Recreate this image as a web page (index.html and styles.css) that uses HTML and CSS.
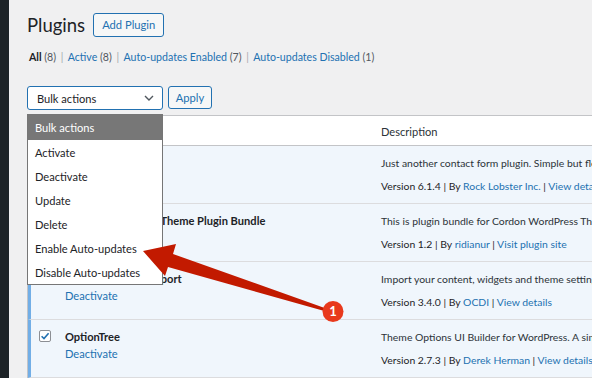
FILE: index.html
```html
<!DOCTYPE html>
<html lang="en">
<head>
    <meta charset="UTF-8">
    <meta name="viewport" content="width=device-width, initial-scale=1.0">
    <title>Plugins</title>
    <link rel="stylesheet" href="styles.css">
</head>
<body>
    <div class="admin">
        <div class="sidebar"></div>
        <main class="wrap">
            <div class="page-head">
                <h1>Plugins</h1>
                <a class="btn-outline" href="#">Add Plugin</a>
            </div>

            <div class="subsubsub">
                <span class="current">All <span class="count">(8)</span></span>
                <span class="sep">|</span>
                <a href="#">Active <span class="count">(8)</span></a>
                <span class="sep">|</span>
                <a href="#">Auto-updates Enabled <span class="count">(7)</span></a>
                <span class="sep">|</span>
                <a href="#">Auto-updates Disabled <span class="count">(1)</span></a>
            </div>

            <div class="tablenav">
                <div class="bulk">
                    <div class="select">
                        Bulk actions
                        <svg class="chevron" width="10" height="6" viewBox="0 0 10 6">
                            <polyline points="1,1 5,5 9,1" fill="none" stroke="#50575e" stroke-width="1.4"/>
                        </svg>
                    </div>
                    <ul class="select-menu">
                        <li class="selected">Bulk actions</li>
                        <li>Activate</li>
                        <li>Deactivate</li>
                        <li>Update</li>
                        <li>Delete</li>
                        <li>Enable Auto-updates</li>
                        <li>Disable Auto-updates</li>
                    </ul>
                </div>
                <button class="btn-apply">Apply</button>
            </div>

            <table class="plugins">
                <thead>
                    <tr>
                        <th class="check-column"><span class="checkbox"></span></th>
                        <th class="plugin-title">Plugin</th>
                        <th>Description</th>
                    </tr>
                </thead>
                <tbody>
                    <tr>
                        <td class="check-column">
                            <span class="checkbox checked">
                                <svg width="12" height="12" viewBox="0 0 12 12"><path d="M2.6 6.2 L5 8.6 L9.6 3.2" fill="none" stroke="#2271b1" stroke-width="1.6"/></svg>
                            </span>
                        </td>
                        <td class="plugin-title">
                            <strong>Contact Form 7</strong>
                            <div class="row-actions"><a href="#">Deactivate</a></div>
                        </td>
                        <td class="desc">
                            <p>Just another contact form plugin. Simple but flexible.</p>
                            <p class="meta">Version 6.1.4 | By <a href="#">Rock Lobster Inc.</a> | <a href="#">View details</a></p>
                        </td>
                    </tr>
                    <tr>
                        <td class="check-column">
                            <span class="checkbox checked">
                                <svg width="12" height="12" viewBox="0 0 12 12"><path d="M2.6 6.2 L5 8.6 L9.6 3.2" fill="none" stroke="#2271b1" stroke-width="1.6"/></svg>
                            </span>
                        </td>
                        <td class="plugin-title">
                            <strong>Cordon WordPress Theme Plugin Bundle</strong>
                            <div class="row-actions"><a href="#">Deactivate</a></div>
                        </td>
                        <td class="desc">
                            <p>This is plugin bundle for Cordon WordPress Theme.</p>
                            <p class="meta">Version 1.2 | By <a href="#">ridianur</a> | <a href="#">Visit plugin site</a></p>
                        </td>
                    </tr>
                    <tr>
                        <td class="check-column">
                            <span class="checkbox checked">
                                <svg width="12" height="12" viewBox="0 0 12 12"><path d="M2.6 6.2 L5 8.6 L9.6 3.2" fill="none" stroke="#2271b1" stroke-width="1.6"/></svg>
                            </span>
                        </td>
                        <td class="plugin-title">
                            <strong>One Click Demo Import</strong>
                            <div class="row-actions"><a href="#">Deactivate</a></div>
                        </td>
                        <td class="desc">
                            <p>Import your content, widgets and theme settings with one click.</p>
                            <p class="meta">Version 3.4.0 | By <a href="#">OCDI</a> | <a href="#">View details</a></p>
                        </td>
                    </tr>
                    <tr>
                        <td class="check-column">
                            <span class="checkbox checked">
                                <svg width="12" height="12" viewBox="0 0 12 12"><path d="M2.6 6.2 L5 8.6 L9.6 3.2" fill="none" stroke="#2271b1" stroke-width="1.6"/></svg>
                            </span>
                        </td>
                        <td class="plugin-title">
                            <strong>OptionTree</strong>
                            <div class="row-actions"><a href="#">Deactivate</a></div>
                        </td>
                        <td class="desc">
                            <p>Theme Options UI Builder for WordPress. A simple way to create &amp; save Theme Options.</p>
                            <p class="meta">Version 2.7.3 | By <a href="#">Derek Herman</a> | <a href="#">View details</a></p>
                        </td>
                    </tr>
                </tbody>
            </table>
        </main>
    </div>

    <!-- callout arrow -->
    <svg class="annotation" width="592" height="378" viewBox="0 0 592 378">
        <polygon points="143,251 176,244 173,254 330.3,310 329.7,312.4 168,267 165,276" fill="#c21a00"/>
        <circle cx="333" cy="311.5" r="10.5" fill="#e8391c"/>
        <text x="333" y="316" text-anchor="middle" class="badge-num">1</text>
    </svg>
</body>
</html>
```

FILE: styles.css
```css
* {
    margin: 0;
    padding: 0;
    box-sizing: border-box;
}

body {
    font-family: Lato, "Noto Sans", sans-serif;
    font-size: 11.1px;
    color: #2c3338;
    background-color: #f0f0f1;
    height: 378px;
    overflow: hidden;
    position: relative;
}

a {
    color: #2271b1;
    text-decoration: none;
}

.admin {
    display: flex;
    height: 378px;
}

.sidebar {
    flex: none;
    width: 9px;
    background-color: #1d2327;
}

.wrap {
    flex: 1;
    min-width: 0;
    padding-left: 18px;
}

.page-head {
    display: flex;
    align-items: center;
    gap: 8px;
    height: 24px;
    margin-top: 13px;
}

h1 {
    font-size: 18.5px;
    font-weight: 400;
    color: #1d2327;
    line-height: 24px;
}

.btn-outline {
    display: inline-block;
    height: 24px;
    line-height: 22px;
    padding: 0 8px;
    border: 1px solid #2271b1;
    border-radius: 3px;
    background-color: #f6f7f7;
    font-size: 11.2px;
}

.subsubsub {
    margin-top: 12px;
    margin-left: 2px;
    line-height: 16px;
    font-size: 10.6px;
    white-space: nowrap;
}

.subsubsub .current {
    color: #1d2327;
    font-weight: 700;
}

.subsubsub .count {
    color: #50575e;
    font-weight: 400;
}

.subsubsub .sep {
    color: #a7aaad;
    margin: 0 2px;
}

.tablenav {
    display: flex;
    gap: 5px;
    height: 24px;
    margin-top: 21px;
}

.bulk {
    position: relative;
}

.select {
    display: flex;
    align-items: center;
    justify-content: space-between;
    width: 136px;
    height: 24px;
    padding: 0 8px 0 9px;
    border: 1px solid #2271b1;
    border-radius: 3px;
    background-color: #fff;
    color: #1d2327;
}

.select-menu {
    position: absolute;
    top: 28px;
    left: 0;
    width: 136px;
    list-style: none;
    background-color: #fff;
    border: 1px solid #767676;
    z-index: 5;
}

.select-menu li {
    height: 24px;
    line-height: 26px;
    padding-left: 7px;
    color: #1d2327;
}

.select-menu .selected {
    height: 25px;
    background-color: #777;
    color: #fff;
}

.btn-apply {
    width: 44px;
    height: 23px;
    border: 1px solid #2271b1;
    border-radius: 3px;
    background-color: #f6f7f7;
    color: #2271b1;
    font-family: inherit;
    font-size: 11.2px;
}

.plugins {
    width: 760px;
    margin-top: 5px;
    border: 1px solid #c3c4c7;
    border-spacing: 0;
    table-layout: fixed;
}

.plugins th {
    height: 30px;
    background-color: #fff;
    border-bottom: 1px solid #c3c4c7;
    text-align: left;
    font-weight: 400;
    color: #2c3338;
    padding: 1px 9px 0;
    vertical-align: middle;
}

.plugins th.check-column {
    width: 29px;
    padding: 0 0 0 11px;
}

.plugins th.plugin-title {
    width: 315px;
    padding-left: 8px;
}

.plugins tbody tr {
    background-color: #f0f6fc;
}

.plugins td {
    height: 58px;
    border-bottom: 1px solid #dcdcde;
    vertical-align: top;
}

.plugins td.check-column {
    border-left: 3px solid #72aee6;
    padding: 10px 0 0 8px;
}

.checkbox {
    display: block;
    width: 12px;
    height: 12px;
    border: 1px solid #8c8f94;
    border-radius: 2px;
    background-color: #fff;
}

.checkbox svg {
    display: block;
    margin: -1px 0 0 -1px;
}

.plugin-title {
    padding: 9px 8px 0;
    line-height: 16px;
    white-space: nowrap;
}

.plugin-title strong {
    display: block;
    color: #1d2327;
    font-weight: 700;
}

.row-actions {
    margin-top: 1px;
    color: #a7aaad;
}

.desc {
    padding: 9px 9px 0;
    line-height: 16px;
    font-size: 10.4px;
    white-space: nowrap;
    overflow: hidden;
    color: #2c3338;
}

.desc .meta {
    margin-top: 7px;
    color: #1d2327;
}

.annotation {
    position: absolute;
    top: 0;
    left: 0;
    pointer-events: none;
    z-index: 10;
}

.badge-num {
    fill: #fff;
    font-family: Lato, sans-serif;
    font-weight: 700;
    font-size: 13px;
}
```
